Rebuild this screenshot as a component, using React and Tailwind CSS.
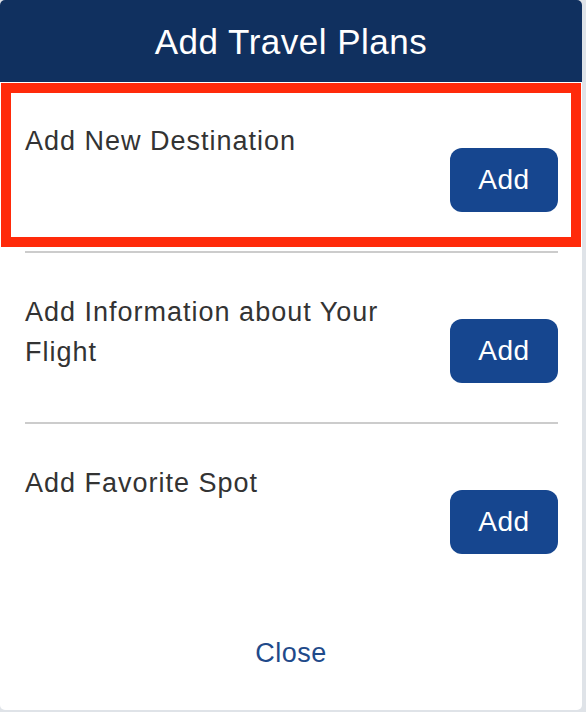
import React from "react";

const font = { fontFamily: '"Liberation Sans", Arial, sans-serif' };

function Item({ children, highlight, last }) {
  return (
    <div className="relative flex items-start justify-between px-[25px] pt-[39px] h-[171px]">
      <div className="w-[380px] text-[27px] leading-[40px] tracking-[1px] text-[#333333]">{children}</div>
      <button className="mt-[27px] mr-[-1px] w-[108px] h-[64px] rounded-[12px] bg-[#16468f] text-white text-[28px] tracking-[0.5px] leading-none shrink-0">
        Add
      </button>
      {!last && <div className="absolute left-[25px] right-[24px] bottom-0 h-[2px] bg-[#cccccc]" />}
      {highlight && (
        <div className="absolute left-[1px] top-[1px] w-[580px] h-[164px] border-[10px] border-[#ff2a0a] pointer-events-none" />
      )}
    </div>
  );
}

export default function App() {
  return (
    <div className="w-[586px] h-[712px] bg-[#dfe3e8]" style={font}>
      <div className="w-[582px] h-[710px] bg-white rounded-[5px] overflow-hidden flex flex-col">
        <div className="h-[82px] bg-[#10305f] flex items-center justify-center shrink-0">
          <span className="text-white text-[35px] tracking-[0.5px] leading-none">Add Travel Plans</span>
        </div>
        <Item highlight>Add New Destination</Item>
        <Item>Add Information about Your Flight</Item>
        <Item last>Add Favorite Spot</Item>
        <div className="flex-1 flex justify-center items-start pt-[45px]">
          <button className="text-[27px] tracking-[0.5px] leading-none text-[#1f4a8a]">Close</button>
        </div>
      </div>
    </div>
  );
}
